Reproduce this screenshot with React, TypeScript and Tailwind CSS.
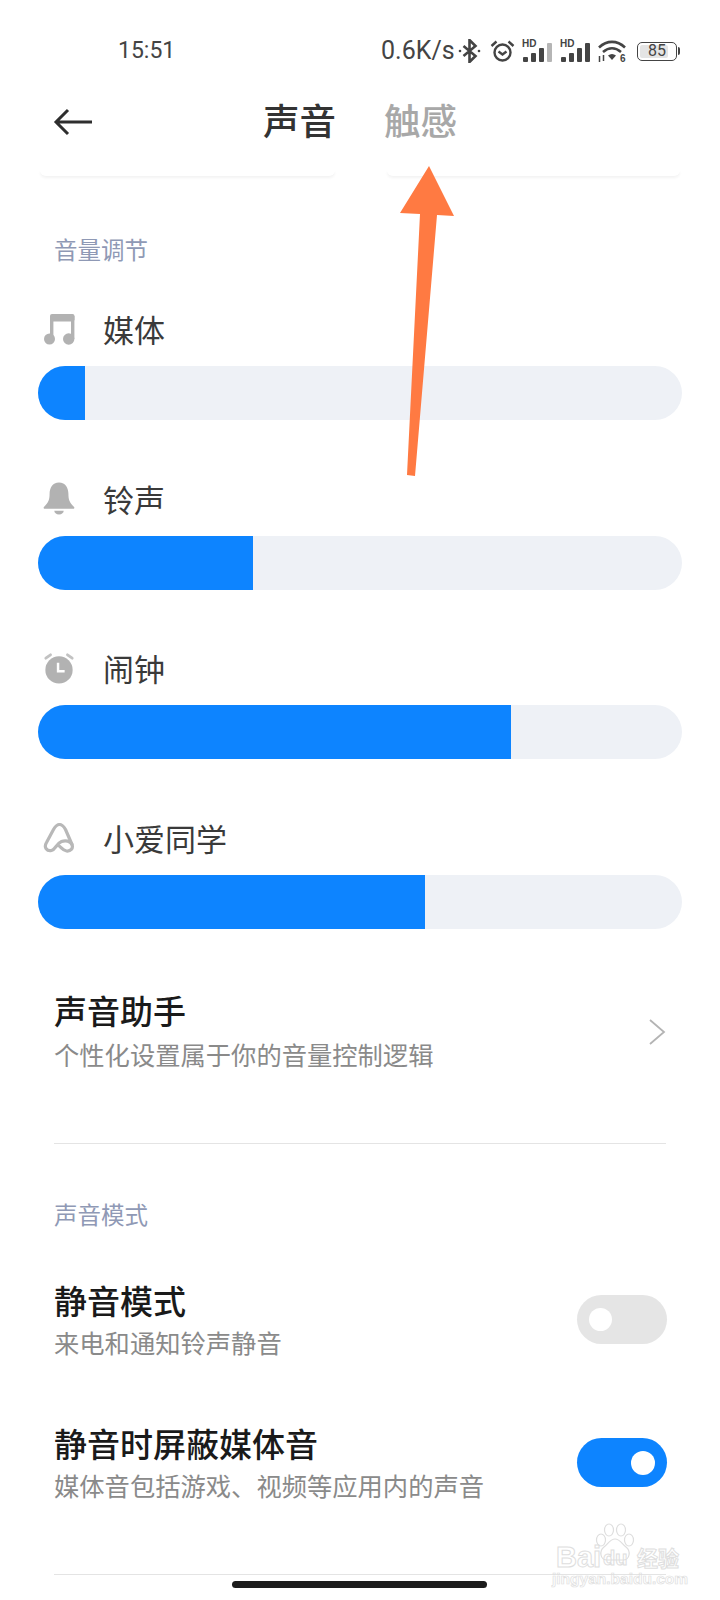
import React from "react";

const font = { fontFamily: '"Noto Sans CJK SC", "Noto Sans", sans-serif' };

function Music() {
  return (
    <svg width="31" height="31" viewBox="0 0 31 31" fill="#b2b2b2">
      <rect x="6" y="0" width="24.5" height="7.5" rx="2" />
      <rect x="6" y="2" width="3.4" height="23" />
      <rect x="27" y="2" width="3.4" height="23" />
      <circle cx="5.5" cy="25" r="5.5" />
      <circle cx="24.7" cy="25" r="5.7" />
    </svg>
  );
}
function Bell() {
  return (
    <svg width="32" height="35" viewBox="0 0 34 36" fill="#b2b2b2">
      <path d="M17 1c7 0 10 6 10 12 0 6 1 9 6 14 1 1 0 2-1 2H2c-1 0-2-1-1-2 5-5 6-8 6-14C7 7 10 1 17 1z" />
      <path d="M12 31h10c0 2-2 4-5 4s-5-2-5-4z" />
    </svg>
  );
}
function Alarm() {
  return (
    <svg width="32" height="33" viewBox="0 0 34 34">
      <circle cx="17" cy="18.5" r="14.5" fill="#b2b2b2" />
      <path d="M16 11v9h7" fill="none" stroke="#fff" strokeWidth="2.6" />
      <path d="M3 6l5-3.5M31 6l-5-3.5" stroke="#c2c2c2" strokeWidth="3" strokeLinecap="round" />
    </svg>
  );
}
function Xiaoai() {
  return (
    <svg width="33" height="31" viewBox="0 0 33 31" fill="none" stroke="#b8b8b8" strokeWidth="3.2" strokeLinejoin="round" strokeLinecap="round">
      <path d="M16.5 2.5c-3 0-4.3 2-6 5L3.5 20.5C0.5 25.5 4 29.5 8.5 28.5 12.5 27.5 13.5 21.5 18.5 19.5 22.5 18 27.5 19 29 22.5 30.5 26.5 27.5 29.500 23.500 29 19.500 28.500 18.500 25.500 15 23" />
      <path d="M16.5 2.5c3 0 4.3 2 6 5L29 22.5" />
    </svg>
  );
}

function Signal({ dim, className }: { dim?: boolean; className: string }) {
  const hs = [5, 9, 14, 19];
  return (
    <div className={"relative h-[24px] w-[30px] " + className}>
      <span
        className="absolute left-0 top-0 text-[10px] leading-[9px] font-bold text-[#444]"
        style={{ fontFamily: '"Liberation Sans", sans-serif' }}
      >
        HD
      </span>
      <div className="absolute bottom-[1px] left-[1px] flex items-end gap-[3.5px]">
        {hs.map((h, i) => (
          <div
            key={i}
            className={i === 3 && dim ? "w-[4.5px] rounded-[1px] bg-[#b5b5b5]" : "w-[4.5px] rounded-[1px] bg-[#444]"}
            style={{ height: h }}
          />
        ))}
      </div>
    </div>
  );
}

function StatusBar() {
  return (
    <div className="flex h-[95px] items-end pb-[32px] text-[#444]">
      <div className="ml-[118px] w-[263px] text-[23px] leading-[24px]" style={{ fontFamily: "Roboto, sans-serif" }}>
        15:51
      </div>
      <div className="w-[72px] whitespace-nowrap text-[25px] leading-[24px]" style={{ fontFamily: "Roboto, sans-serif" }}>
        0.6K/s
      </div>
      <div className="flex items-center">
        <svg className="ml-[5px]" width="23" height="24" viewBox="0 0 23 24" fill="none" stroke="#444" strokeWidth="2.6">
          <path d="M5.5 7l12 10-6 6V1l6 6-12 10" />
          <circle cx="2" cy="12" r="1.3" fill="#444" stroke="none" />
          <circle cx="21" cy="12" r="1.3" fill="#444" stroke="none" />
        </svg>
        <svg className="ml-[9px]" width="25" height="22" viewBox="0 0 25 22" fill="none" stroke="#444" strokeWidth="2.4">
          <circle cx="12.5" cy="12.5" r="8" />
          <path d="M8.5 11.5l4 3 4-3M1.5 6l5-4.5M23.5 6l-5-4.5" />
        </svg>
        <Signal dim className="ml-[7px]" />
        <Signal className="ml-[8px]" />
        <svg className="ml-[7px]" width="30" height="23" viewBox="0 0 30 23" fill="none" stroke="#444" strokeWidth="2.6">
          <path d="M2 7.5c8-7.5 18-7.5 26 0M6 12c6-5 12-5 18 0" />
          <path d="M11 15.5c2.5-2 5.5-2 8 0l-4 4.5z" fill="#444" stroke="none" />
          <path d="M2.5 16v6M6.5 15v6" strokeWidth="1.5" />
          <text x="23" y="22" fontSize="10" fontWeight="700" fill="#444" stroke="none" style={{ fontFamily: '"Liberation Sans", sans-serif' }}>6</text>
        </svg>
        <div className="ml-[10px] flex items-center">
          <div
            className="relative flex h-[19px] w-[40px] items-center justify-center rounded-[5px] border-[1.5px] border-[#444] text-[16px] text-[#444]"
            style={{ fontFamily: "Roboto, sans-serif" }}
          >
            <div className="absolute bottom-[2px] left-[2px] top-[2px] w-[28px] rounded-[2px] bg-[#e4e4e4]" />
            <span className="relative">85</span>
          </div>
          <div className="ml-[1px] h-[8px] w-[2px] rounded-r bg-[#444]" />
        </div>
      </div>
    </div>
  );
}

function Header() {
  return (
    <div className="flex h-[50px] items-center">
      <svg className="ml-[53px] mt-[4px]" width="40" height="28" viewBox="0 0 40 28" fill="none" stroke="#2e2e2e" strokeWidth="3">
        <path d="M39 14H3M15 2L3 14l12 12" />
      </svg>
      <div className="ml-[170px] text-[36.5px] leading-[50px] font-medium text-[#333]">声音</div>
      <div className="ml-[48px] text-[36.5px] leading-[50px] font-medium text-[#a8a8a8]">触感</div>
    </div>
  );
}

function VolumeRow({ label, icon, fill }: { label: string; icon: React.ReactNode; fill: number }) {
  return (
    <div className="h-[169.5px] pl-[38px] pr-[38px]">
      <div className="flex h-[50px] items-center">
        <div className="flex w-[40px] justify-center pl-[2px]">{icon}</div>
        <div className="ml-[25px] text-[31px] leading-[42px] text-[#3a3a3a]">{label}</div>
      </div>
      <div className="mt-[12px] h-[54px] overflow-hidden rounded-[27px] bg-[#eef1f6]">
        <div className="h-full bg-[#0d84ff]" style={{ width: fill }} />
      </div>
    </div>
  );
}

function Toggle({ on }: { on?: boolean }) {
  return (
    <div
      className={
        on
          ? "flex h-[49px] w-[90px] items-center justify-end rounded-[25px] bg-[#0d84ff] pr-[12px]"
          : "flex h-[49px] w-[90px] items-center justify-start rounded-[25px] bg-[#e5e5e5] pl-[12px]"
      }
    >
      <div className={on ? "h-[24px] w-[24px] rounded-full bg-white" : "h-[23px] w-[23px] rounded-full bg-white"} />
    </div>
  );
}

function ToggleRow({ title, sub, on }: { title: string; sub: string; on?: boolean }) {
  return (
    <div className="flex h-[143px] items-center justify-between pl-[54px] pr-[53px]">
      <div className="mt-[2px]">
        <div className="text-[33px] leading-[42px] font-medium text-[#1a1a1a]">{title}</div>
        <div className="text-[25.3px] leading-[42px] text-[#8a8a8a]">{sub}</div>
      </div>
      <Toggle on={on} />
    </div>
  );
}

export default function App() {
  return (
    <div className="relative h-[1600px] w-[720px] overflow-hidden bg-white" style={font}>
      <StatusBar />
      <Header />

      <div className="mx-[40px] mt-[25px] flex justify-between">
        <div className="h-[6px] w-[295px] rounded-b-[14px] bg-white shadow-[0_2px_3px_rgba(0,0,0,0.05)]" />
        <div className="h-[6px] w-[293px] rounded-b-[14px] bg-white shadow-[0_2px_3px_rgba(0,0,0,0.05)]" />
      </div>

      <div className="mt-[55px] pl-[54px] text-[23.5px] leading-[36px] text-[#8f99b5]">音量调节</div>

      <div className="mt-[37px]">
        <VolumeRow label="媒体" icon={<Music />} fill={47} />
        <VolumeRow label="铃声" icon={<Bell />} fill={215} />
        <VolumeRow label="闹钟" icon={<Alarm />} fill={473} />
        <VolumeRow label="小爱同学" icon={<Xiaoai />} fill={387} />
      </div>

      <div className="flex items-center justify-between pl-[54px] pr-[54px] pt-[7px]">
        <div>
          <div className="text-[33px] leading-[42px] font-medium text-[#1a1a1a]">声音助手</div>
          <div className="mt-[2px] text-[25.3px] leading-[42px] text-[#8a8a8a]">个性化设置属于你的音量控制逻辑</div>
        </div>
        <svg width="18" height="28" viewBox="0 0 18 28" fill="none" stroke="#b4b4b4" strokeWidth="1.8">
          <path d="M2 2l14 12L2 26" />
        </svg>
      </div>

      <div className="mx-[54px] mt-[68px] h-[1px] bg-[#e4e4e4]" />

      <div className="mt-[52px] pl-[54px] text-[23.5px] leading-[36px] text-[#8f99b5]">声音模式</div>

      <div className="mt-[16px]">
        <ToggleRow title="静音模式" sub="来电和通知铃声静音" />
        <ToggleRow title="静音时屏蔽媒体音" sub="媒体音包括游戏、视频等应用内的声音" on />
      </div>

      <div className="mx-[54px] mt-[40px] h-[1px] bg-[#e4e4e4]" />

      {/* annotation arrow */}
      <svg className="absolute left-0 top-0" width="720" height="500" viewBox="0 0 720 500">
        <path d="M429 166 L454 216 L437 215 L415 476 L407 475 L420 214 L400 213 Z" fill="#ff7a42" />
      </svg>

      {/* home indicator */}
      <div className="absolute bottom-[12px] left-[232px] h-[7px] w-[255px] rounded-full bg-[#1c1c1c]" />

      {/* watermark */}
      <div className="absolute left-[552px] top-[1520px] h-[72px] w-[134px] text-transparent" style={{ fontFamily: '"Liberation Sans", sans-serif' }}>
        <svg className="absolute left-[42px] top-[3px]" width="42" height="42" viewBox="0 0 42 42" fill="none" stroke="#dedede" strokeWidth="1.2">
          <ellipse cx="7" cy="17" rx="4.5" ry="6" />
          <ellipse cx="15" cy="7" rx="4.5" ry="6" />
          <ellipse cx="27" cy="7" rx="4.5" ry="6" />
          <ellipse cx="35" cy="17" rx="4.5" ry="6" />
          <path d="M21 16c5 0 7 5 11 8 5 4 4 13-3 13H13C6 37 5 28 10 24c4-3 6-8 11-8z" />
        </svg>
        <div className="absolute left-[4px] top-[24px] text-[29px] leading-[26px] font-bold [-webkit-text-stroke:1px_#dedede]">Bai</div>
        <div className="absolute left-[51px] top-[27px] text-[20px] leading-[22px] font-bold [-webkit-text-stroke:1px_#dedede]">du</div>
        <div className="absolute left-[85px] top-[24px] text-[21px] leading-[26px] font-bold [-webkit-text-stroke:1px_#dedede]" style={font}>经验</div>
        <div className="absolute left-0 top-[50px] text-[15.5px] leading-[18px] font-bold whitespace-nowrap [-webkit-text-stroke:0.7px_#dedede]">jingyan.baidu.com</div>
      </div>
    </div>
  );
}
